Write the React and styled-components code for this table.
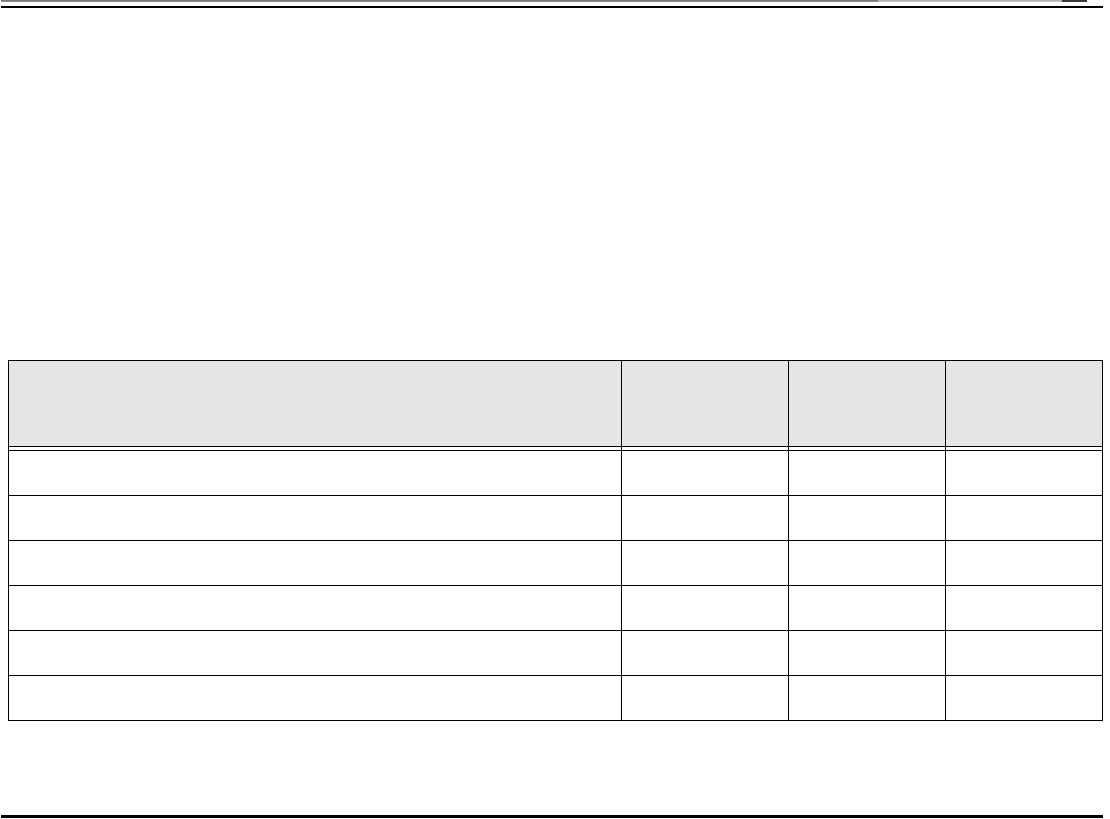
import React from "react";
import styled, { createGlobalStyle } from "styled-components";

const Global = createGlobalStyle`
  html, body { margin: 0; padding: 0; background: #ffffff; }
  body { font-family: "Liberation Sans", Arial, sans-serif; }
`;

const Page = styled.div`
  width: 1110px;
  height: 819px;
  display: flex;
  flex-direction: column;
  overflow: hidden;
`;

const TopStrip = styled.div`
  display: flex;
  height: 2px;
  padding-left: 1px;
`;

const StripSegment = styled.div`
  height: 100%;
  width: ${(p) => p.$w}px;
  background: ${(p) => p.$c};
`;

const Rule = styled.div`
  height: ${(p) => p.$h}px;
  margin: ${(p) => p.$mt}px 7px 0 1px;
  background: #000;
`;

const Table = styled.table`
  margin: 352px 0 0 8px;
  width: 1094px;
  border-collapse: collapse;
  table-layout: fixed;
`;

const HeadCell = styled.th`
  height: 85px;
  padding: 0;
  background: #e5e5e5;
  border: 1px solid #000;
`;

const GapCell = styled.td`
  height: 3px;
  padding: 0;
  border-left: 1px solid #000;
  border-right: 1px solid #000;
`;

const Cell = styled.td`
  height: 44px;
  padding: 0;
  border: 1px solid #000;
`;

const widths = [613, 167, 157, 157];
const rows = [0, 1, 2, 3, 4, 5];

export default function App() {
  return (
    <>
      <Global />
      <Page>
        <TopStrip>
          <StripSegment $w={877} $c="linear-gradient(#6e6e6e, #9a9a9a)" />
          <StripSegment $w={184} $c="linear-gradient(#a8a8a8, #cfcfcf)" />
          <StripSegment $w={25} $c="#3a3a3a" />
        </TopStrip>
        <Rule $h={2} $mt={4} />
        <Table>
          <colgroup>
            {widths.map((w, i) => (
              <col key={i} style={{ width: w }} />
            ))}
          </colgroup>
          <thead>
            <tr>
              {widths.map((_, i) => (
                <HeadCell key={i} />
              ))}
            </tr>
          </thead>
          <tbody>
            <tr>
              {widths.map((_, i) => (
                <GapCell key={i} />
              ))}
            </tr>
            {rows.map((r) => (
              <tr key={r}>
                {widths.map((_, i) => (
                  <Cell key={i} />
                ))}
              </tr>
            ))}
          </tbody>
        </Table>
        <Rule $h={3} $mt={94} />
      </Page>
    </>
  );
}
